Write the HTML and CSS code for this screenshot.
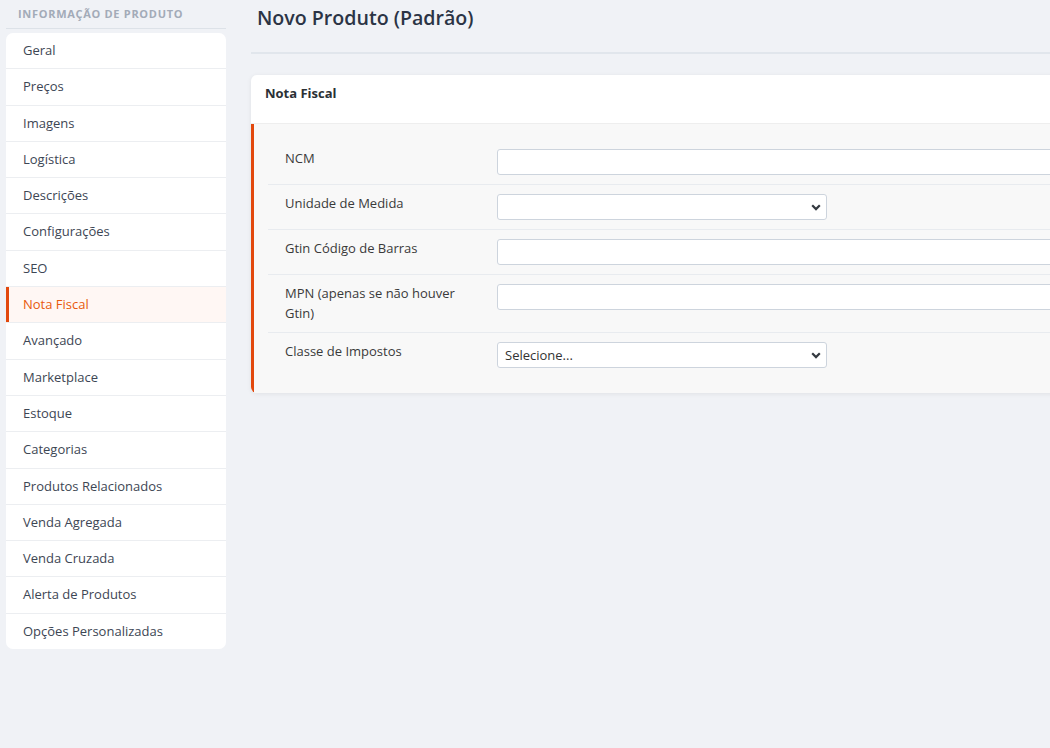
FILE: index.html
```html
<!DOCTYPE html>
<html lang="pt-BR">
<head>
  <meta charset="UTF-8" />
  <meta name="viewport" content="width=device-width, initial-scale=1.0"/>
  <title>Novo Produto (Padrão)</title>
  <link rel="stylesheet" href="styles.css">
</head>
<body>
  <div class="page">
    <aside class="sidebar">
      <div class="sidebar-title">INFORMAÇÃO DE PRODUTO</div>
      <ul class="menu">
        <li>Geral</li>
        <li>Preços</li>
        <li>Imagens</li>
        <li>Logística</li>
        <li>Descrições</li>
        <li>Configurações</li>
        <li>SEO</li>
        <li class="active">Nota Fiscal</li>
        <li>Avançado</li>
        <li>Marketplace</li>
        <li>Estoque</li>
        <li>Categorias</li>
        <li>Produtos Relacionados</li>
        <li>Venda Agregada</li>
        <li>Venda Cruzada</li>
        <li>Alerta de Produtos</li>
        <li>Opções Personalizadas</li>
      </ul>
    </aside>

    <main class="main">
      <h1 class="page-title">Novo Produto (Padrão)</h1>
      <hr class="divider">

      <section class="card">
        <div class="card-header">Nota Fiscal</div>
        <div class="card-body">
          <div class="row">
            <label class="row-label">NCM</label>
            <input type="text" class="field" />
          </div>
          <div class="row">
            <label class="row-label">Unidade de Medida</label>
            <div class="select-wrap">
              <select class="field select"><option></option></select>
              <svg class="chevron" width="10" height="7" viewBox="0 0 10 7"><path d="M1.2 1.3 5 5.1 8.8 1.3" fill="none" stroke="#343a40" stroke-width="2.2"/></svg>
            </div>
          </div>
          <div class="row">
            <label class="row-label">Gtin Código de Barras</label>
            <input type="text" class="field" />
          </div>
          <div class="row">
            <label class="row-label">MPN (apenas se não houver Gtin)</label>
            <input type="text" class="field" />
          </div>
          <div class="row">
            <label class="row-label">Classe de Impostos</label>
            <div class="select-wrap">
              <select class="field select"><option>Selecione...</option></select>
              <svg class="chevron" width="10" height="7" viewBox="0 0 10 7"><path d="M1.2 1.3 5 5.1 8.8 1.3" fill="none" stroke="#343a40" stroke-width="2.2"/></svg>
            </div>
          </div>
        </div>
      </section>
    </main>
  </div>
</body>
</html>
```

FILE: styles.css
```css
html, body { margin: 0; overflow: hidden; }
body { background: #f0f2f6; font-family: "Open Sans", "Noto Sans", sans-serif; font-size: 13px; color: #3a3f47; }
.page { display: flex; align-items: flex-start; }

.sidebar { width: 220px; margin-left: 6px; flex-shrink: 0; }
.sidebar-title { padding: 6px 12px 7px; font-size: 11px; font-weight: 700; letter-spacing: 0.7px; color: #a3abb8; border-bottom: 1px solid #dde2e8; line-height: 15px; }
.menu { list-style: none; margin: 4px 0 0; padding: 0; background: #fff; border-radius: 7px; overflow: hidden; }
.menu li { padding: 8px 17px; line-height: 19.3px; color: #3d4654; border-bottom: 1px solid #eceef1; }
.menu li:last-child { border-bottom: none; }
.menu li.active { background: #fff7f4; color: #e8590c; box-shadow: inset 3px 0 0 #e2480d; }

.main { margin-left: 25px; width: 900px; flex-shrink: 0; }
.page-title { margin: 5px 0 0 6px; font-size: 19.6px; line-height: 26px; font-weight: 600; color: #2b3445; }
.divider { margin: 21px 0 0; border: none; border-top: 2px solid #e1e6ec; }

.card { margin-top: 21px; background: #fff; border-radius: 6px 0 0 6px; box-shadow: 0 1px 5px rgba(0,0,0,0.07); overflow: hidden; }
.card-header { padding: 9px 14px 20px; line-height: 19px; font-weight: 700; color: #2b3035; border-bottom: 1px solid #eeeeee; }
.card-body { background: #f8f8f8; border-left: 3px solid #e2480d; padding: 16px 0 16px 14px; }

.row { display: flex; align-items: flex-start; padding: 9px 0 9px 17px; border-bottom: 1px solid #e8ebef; }
.row:last-child { border-bottom: none; }
.row-label { width: 196px; padding-right: 16px; line-height: 19.5px; color: #3a3a3a; }

.field { box-sizing: border-box; height: 26px; border: 1px solid #cdd4dd; border-radius: 3px; background: #fff; font-family: inherit; font-size: 13px; color: #333; padding: 0 7px; }
input.field { flex: 1; }
.select-wrap { position: relative; width: 330px; }
.select { width: 100%; appearance: none; -webkit-appearance: none; outline: none; }
.chevron { position: absolute; right: 6px; top: 10px; pointer-events: none; }
```
